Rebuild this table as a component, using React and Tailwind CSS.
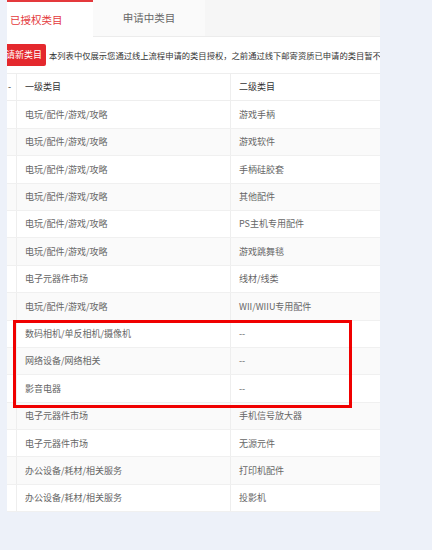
import React from 'react';

const rows = [
  ['电玩/配件/游戏/攻略', '游戏手柄'],
  ['电玩/配件/游戏/攻略', '游戏软件'],
  ['电玩/配件/游戏/攻略', '手柄硅胶套'],
  ['电玩/配件/游戏/攻略', '其他配件'],
  ['电玩/配件/游戏/攻略', 'PS主机专用配件'],
  ['电玩/配件/游戏/攻略', '游戏跳舞毯'],
  ['电子元器件市场', '线材/线类'],
  ['电玩/配件/游戏/攻略', 'WII/WIIU专用配件'],
  ['数码相机/单反相机/摄像机', '--'],
  ['网络设备/网络相关', '--'],
  ['影音电器', '--'],
  ['电子元器件市场', '手机信号放大器'],
  ['电子元器件市场', '无源元件'],
  ['办公设备/耗材/相关服务', '打印机配件'],
  ['办公设备/耗材/相关服务', '投影机'],
];

const font = { fontFamily: '"Noto Sans CJK SC", "Noto Sans", sans-serif' };

const App = () => {
  return (
    <div className="relative w-[432px] h-[550px] bg-[#edf1f9] pl-[7px] overflow-hidden" style={font}>
      <div className="w-[373px] bg-white overflow-hidden">
        {/* tabs */}
        <div className="flex h-[37px] bg-[#f6f6f6]">
          <div className="w-[86px] bg-white border-t-2 border-[#e4393c] flex items-center pl-[3px] text-[10.5px] text-[#e4393c] whitespace-nowrap">
            已授权类目
          </div>
          <div className="w-[112px] bg-[#fafafa] border-b border-[#ececec] flex items-center justify-center text-[10.5px] text-[#666]">
            申请中类目
          </div>
          <div className="flex-1 border-b border-[#ececec]" />
        </div>

        {/* notice */}
        <div className="flex items-center h-[37px] border-b border-[#eeeeee] whitespace-nowrap overflow-hidden">
          <div className="h-[22px] w-[39px] shrink-0 bg-[#e4282d] rounded-r-[2px] flex items-center justify-end pr-[4px] text-[9px] text-white overflow-hidden">
            请新类目
          </div>
          <span className="ml-[3px] text-[8.3px] text-[#333]">
            本列表中仅展示您通过线上流程申请的类目授权，之前通过线下邮寄资质已申请的类目暂不
          </span>
        </div>

        {/* table */}
        <div className="text-[9px]">
          <div className="grid grid-cols-[10px_214px_149px] h-[27.4px] border-b border-[#eeeeee] text-[#333]">
            <div className="border-r border-[#eeeeee] flex items-center pl-[1px]">-</div>
            <div className="border-r border-[#eeeeee] flex items-center pl-[8px]">一级类目</div>
            <div className="flex items-center pl-[8px]">二级类目</div>
          </div>
          {rows.map(([a, b], i) => (
            <div
              key={i}
              className={`grid grid-cols-[10px_214px_149px] h-[27.4px] border-b border-[#f0f0f0] text-[#666] ${
                i % 2 === 1 ? 'bg-[#fafafa]' : 'bg-white'
              }`}
            >
              <div className="border-r border-[#eeeeee]" />
              <div className="border-r border-[#eeeeee] flex items-center pl-[8px] whitespace-nowrap">{a}</div>
              <div className="flex items-center pl-[8px] whitespace-nowrap">{b}</div>
            </div>
          ))}
        </div>
      </div>

      {/* annotation box */}
      <div className="absolute left-[13px] top-[320px] w-[339px] h-[88px] border-[3px] border-[#f00000]" />
    </div>
  );
};

export default App;
